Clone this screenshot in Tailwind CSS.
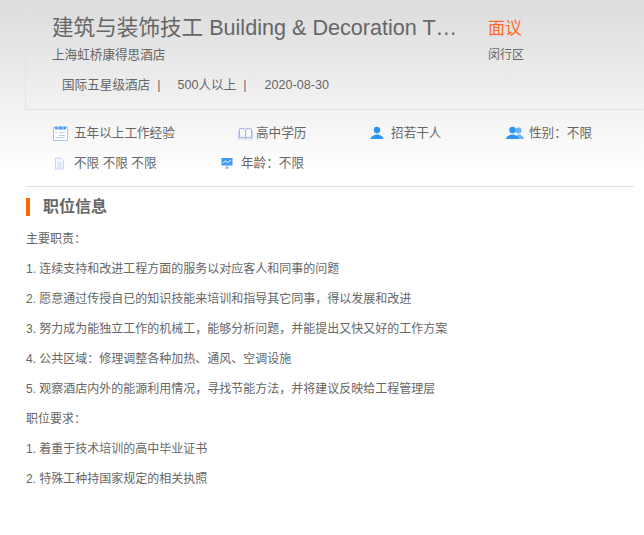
<!DOCTYPE html>
<html lang="zh-CN">
<head>
  <meta charset="UTF-8">
  <title>建筑与装饰技工</title>
  <script src="https://cdn.jsdelivr.net/npm/@tailwindcss/browser@4"></script>
</head>
<body class="bg-white text-[#666] font-['Liberation_Sans','Noto_Sans_CJK_SC',sans-serif] h-[535px] overflow-hidden">
  <div class="h-[172px] bg-gradient-to-b from-[#dcdcdc] to-white">
    <!-- 标题区 -->
    <div class="ml-[25px] h-[110px] pt-[14px] pl-[26px] border-l border-b border-[#e2e2e2] flex">
      <div class="w-[436px]">
        <h1 class="whitespace-nowrap text-[21.6px] leading-[27px] text-[#666]">建筑与装饰技工 Building &amp; Decoration T…</h1>
        <p class="mt-[5px] text-[12.6px] leading-[18px]">上海虹桥康得思酒店</p>
        <p class="mt-[12px] pl-[10px] text-[12.6px] leading-[18px] flex">
          <span>国际五星级酒店&nbsp;&nbsp;|</span>
          <span class="ml-[17px]">500人以上&nbsp;&nbsp;|</span>
          <span class="ml-[18px]">2020-08-30</span>
        </p>
      </div>
      <div>
        <p class="text-[17px] leading-[27px] pt-[1px] text-[#ff6a2b]">面议</p>
        <p class="mt-[4px] text-[12px] leading-[18px]">闵行区</p>
      </div>
    </div>

    <!-- 条件 -->
    <div class="pl-[53px] pt-[14px] text-[12.6px] leading-[18px]">
      <div class="flex">
        <div class="w-[185px] flex items-center gap-[6px]">
          <svg class="w-[15px] h-[15px]" viewBox="0 0 15 15" fill="none"><rect x="0.500" y="1.500" width="14" height="13" fill="#fff" stroke="#a9c4f5"/><path d="M2 0.500H13V3.500H2Z" fill="#3f9bfa"/><path d="M5 0V3.500M10 0V3.500" stroke="#cfe3fd"/><path d="M6 6.500H12M6 9.500H12M2.500 6.500H4M2.500 11.500H12" stroke="#b5cdf7"/></svg>
          <span>五年以上工作经验</span>
        </div>
        <div class="w-[132px] flex items-center gap-[3px]">
          <svg class="w-[15px] h-[15px]" viewBox="0 0 15 15" fill="none" stroke="#a0b0f2"><path d="M7.500 3.500C6 2 3 2 1.500 3V12C3 11 6 11 7.500 12.500C9 11 12 11 13.500 12V3C12 2 9 2 7.500 3.500ZM7.500 3.500V12.500"/><path d="M0.500 5V13H14.500V5" stroke="#c9d4f8"/></svg>
          <span>高中学历</span>
        </div>
        <div class="w-[136px] flex items-center gap-[7px]">
          <svg class="w-[14px] h-[14px]" viewBox="0 0 14 14" fill="#2b95f5"><circle cx="7" cy="4" r="3.200"/><path d="M0.500 13C1 9.800 4 9.500 5.500 8.500H8.500C10 9.500 13 9.800 13.500 13Z"/></svg>
          <span>招若干人</span>
        </div>
        <div class="flex items-center gap-[5px]">
          <svg class="w-[18px] h-[14px]" viewBox="0 0 18 14"><circle cx="12.500" cy="4.500" r="3" fill="#6cb4f7"/><path d="M9 13C9.500 10 11 9.500 12 8.500H14C15 9.500 17.500 10 18 13Z" fill="#6cb4f7"/><circle cx="6.500" cy="4" r="3.300" fill="#2b95f5"/><path d="M0 13C0.500 9.800 3.500 9.500 5 8.500H8C9.500 9.500 12.500 9.800 13 13Z" fill="#2b95f5"/></svg>
          <span>性别：不限</span>
        </div>
      </div>
      <div class="flex mt-[12px]">
        <div class="w-[168px] flex items-center gap-[8px]">
          <svg class="w-[13px] h-[13px]" viewBox="0 0 13 13" fill="none" stroke="#c5d5f8"><path d="M2.500 1H8L10.500 3.500V12H2.500Z" fill="#f3f6ff"/><path d="M4.500 6H8.500M4.500 8H8.500M4.500 10H8.500"/></svg>
          <span>不限 不限 不限</span>
        </div>
        <div class="flex items-center gap-[8px]">
          <svg class="w-[12px] h-[12px]" viewBox="0 0 12 12" fill="none"><rect x="0.500" y="1" width="11" height="7.500" fill="#3f9bfa"/><path d="M2 6L4.500 4L6.500 5.500L10 3" stroke="#fff"/><path d="M6 8.500V11M4 11H8" stroke="#8a9cf0"/></svg>
          <span>年龄：不限</span>
        </div>
      </div>
    </div>
  </div>

  <!-- 职位信息 -->
  <div class="ml-[26px] mr-[10px] mt-[14px] border-t border-[#e2e2e2] pt-[11px]">
    <h2 class="flex items-center h-[18px] border-l-[4px] border-[#ff6600] pl-[13px] text-[16px] font-bold text-[#666]">职位信息</h2>
    <div class="mt-[8px] text-[12px] leading-[30px] text-[#666]">
      <p>主要职责：</p>
      <p>1. 连续支持和改进工程方面的服务以对应客人和同事的问题</p>
      <p>2. 愿意通过传授自已的知识技能来培训和指导其它同事，得以发展和改进</p>
      <p>3. 努力成为能独立工作的机械工，能够分析问题，并能提出又快又好的工作方案</p>
      <p>4. 公共区域：修理调整各种加热、通风、空调设施</p>
      <p>5. 观察酒店内外的能源利用情况，寻找节能方法，并将建议反映给工程管理层</p>
      <p>职位要求：</p>
      <p>1. 着重于技术培训的高中毕业证书</p>
      <p>2. 特殊工种持国家规定的相关执照</p>
    </div>
  </div>
</body>
</html>
